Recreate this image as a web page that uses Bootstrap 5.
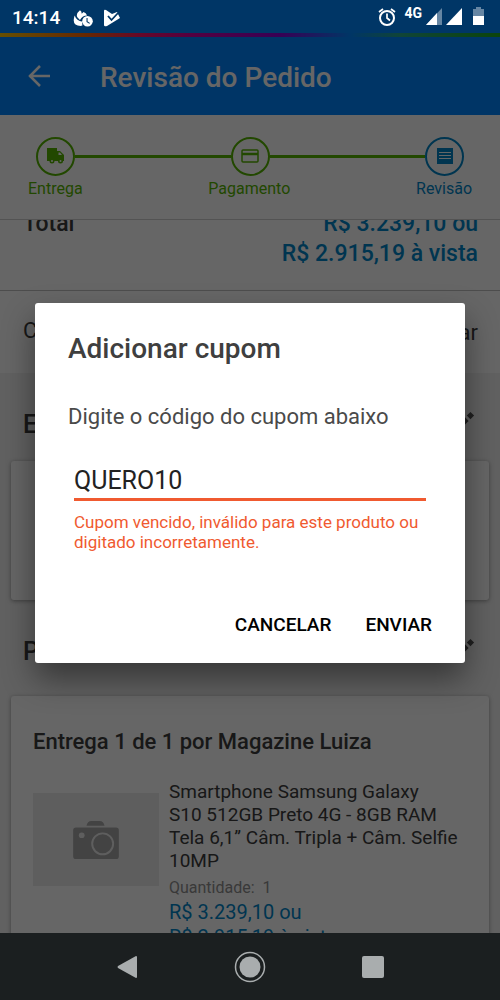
<!DOCTYPE html>
<html lang="pt-BR">
<head>
<meta charset="utf-8">
<meta name="viewport" content="width=device-width, initial-scale=1">
<title>Revisão do Pedido</title>
<link href="https://cdn.jsdelivr.net/npm/bootstrap@5.3.0/dist/css/bootstrap.min.css" rel="stylesheet">
<style>
  body { font-family: Roboto, "Liberation Sans", sans-serif; color: #3c3c3c; background: #1b1f20; }
  svg { display: block; flex: none; }
  .fw-mid { font-weight: 500; }
  .shell { height: 100vh; }
  .status-bar { height: 33px; background: #003666; color: #fff; font-size: 19px; padding: 0 14px 0 12px; }
  .net { font-size: 14px; line-height: 14px; margin-top: -8px; }
  .screen { background: #f2f2f2; }
  .rainbow { height: 4px; background: linear-gradient(90deg, #ffc400 0%, #ff6400 17%, #ff1464 28%, #d200a0 38%, #8c00d2 56%, #0086ff 70%, #28aa8c 80%, #1eaa1e 100%); }
  .app-bar { height: 78px; background: #0086ff; color: #fff; padding-left: 26px; gap: 46px; }
  .app-bar h1 { font-size: 28px; }
  .stepper { background: #fff; border-bottom: 1px solid #d0d0d0; height: 105px; padding: 21px 28px 0; z-index: 1; }
  .track { height: 40px; padding: 0 8px; }
  .ring { width: 39px; height: 39px; border: 2px solid; border-radius: 50%; }
  .rail { height: 3px; background: #55b400; }
  .done { color: #55b400; }
  .current { color: #0086c9; }
  .labels { font-size: 16px; line-height: 26px; }
  .total { background: #fff; margin-top: -11px; height: 82px; padding: 0 22px 0 23px; border-bottom: 1px solid #c0c0c0; font-size: 23px; line-height: 30px; }
  .coupon-row { background: #fff; height: 82px; padding: 0 22px 0 23px; font-size: 22px; }
  .heading { font-size: 25px; line-height: 30px; height: 88px; padding: 8px 25px 0 23px; }
  .panel { background: #fff; margin: 0 11px; border-radius: 3px; box-shadow: 0 1px 4px #00000060; }
  .address { height: 139px; }
  .items { padding: 30px 22px 48px; }
  .items h3 { font-size: 22px; line-height: 32px; }
  .photo { width: 126px; height: 93px; background: #ececec; color: #a8a8a8; margin-top: 13px; }
  .product { font-size: 19px; line-height: 23px; gap: 10px; margin-top: 22px; }
  .qty { font-size: 16px; line-height: 24px; color: #8f8f8f; }
  .cost { font-size: 20px; line-height: 25px; }
  .shade { background: rgba(0, 0, 0, .6); z-index: 2; padding: 0 35px; }
  .dialog { background: #fff; border-radius: 3px; box-shadow: 0 16px 32px #00000070; padding: 29px 33px 24px; }
  .dialog h2 { font-size: 28px; line-height: 34px; color: #3f3f3f; }
  .dialog label { font-size: 22px; line-height: 30px; color: #4a4a4a; margin-top: 36px; }
  .field { margin: 0 6px; padding-top: 32px; }
  .code { border: 0; border-bottom: 3px solid #f05a30; font-size: 25px; line-height: 34px; color: #222; background: none; outline: 0; padding: 0; }
  .problem { font-size: 17px; line-height: 20px; color: #f05a30; margin-top: 11px; }
  .actions { gap: 34px; margin-top: 59px; }
  .act { border: 0; background: none; color: #000; font-size: 19px; line-height: 28px; padding: 0; font-weight: 500; }
  .soft-keys { height: 67px; background: #1b1f20; color: #a9adae; gap: 96px; }
  .soft-keys button { border: 0; background: none; color: inherit; padding: 0; }
</style>
</head>
<body>
<div class="shell d-flex flex-column">
  <header class="status-bar d-flex align-items-center justify-content-between flex-shrink-0">
    <div class="d-flex align-items-center pt-1">
      <span class="fw-mid">14:14</span>
      <svg class="ms-2 ps-1" width="27" height="22" viewBox="0 0 26 22"><path fill="#fff" d="M9 1q-5 4-3 8l3 3q3-5 8-5q-1-3-4-4l-2 2q0-3-2-4zM3 7q-4 12 7 12l2-1q-1-2 0-4q-7-1-9-7z"/><circle cx="17.500" cy="13.500" r="6" fill="#fff"/><path d="M17 10v4l3 2" fill="none" stroke="#003666" stroke-width="1.200"/></svg>
      <svg class="ms-2" width="18" height="20" viewBox="0 0 18 20"><path fill="#fff" d="M1 2q0-2 2-1l6 4l5-2l3 6L4 17q-3 1-3-1z"/><path d="M5 7l3.500 4L15 4" fill="none" stroke="#003666" stroke-width="1.800"/></svg>
    </div>
    <div class="d-flex align-items-center">
      <svg width="18" height="20" viewBox="0 0 18 20" fill="none" stroke="#fff" stroke-width="2"><circle cx="9" cy="11" r="7"/><path d="M9 6.500V11l3 2.500M1 5l4-3M17 5l-4-3" stroke-width="1.700"/></svg>
      <span class="net fw-bold ms-2">4G</span>
      <svg class="ms-1" width="16" height="17" viewBox="0 0 16 17"><path fill="#6686a3" d="M16 0v17H0z"/><path fill="#fff" d="M11 5v12H0z"/></svg>
      <svg class="ms-1" width="16" height="17" viewBox="0 0 16 17"><path fill="#fff" d="M16 0v17H0z"/></svg>
      <svg class="ms-2" width="16" height="19" viewBox="0 0 16 19"><path fill="#6686a3" d="M3 2h3V0h5v2h3v7H3z"/><path fill="#fff" d="M3 9h11v9H3z"/></svg>
    </div>
  </header>

  <div class="screen position-relative flex-grow-1 d-flex flex-column overflow-hidden">
    <div class="rainbow flex-shrink-0"></div>
    <div class="app-bar d-flex align-items-center flex-shrink-0">
      <svg width="28" height="26" viewBox="0 0 28 26" fill="none" stroke="#fff" stroke-width="2.500"><path d="M24 13H3M14 3L4 13l10 10"/></svg>
      <h1 class="fw-mid m-0 pt-1">Revisão do Pedido</h1>
    </div>
    <div class="stepper flex-shrink-0">
      <div class="track d-flex align-items-center">
        <span class="ring done d-flex align-items-center justify-content-center flex-shrink-0">
          <svg width="19" height="16" viewBox="0 0 19 16" fill="currentColor"><path d="M1 0h10v3h3l4 4v6h-1a2.500 2.500 0 0 1-5 0H8.500a2.500 2.500 0 0 1-5 0H1z"/><path d="M12.500 4.500h1.500l2 2.500h-3.500z" fill="#fff"/><circle cx="6" cy="13" r="1" fill="#fff"/><circle cx="14.500" cy="13" r="1" fill="#fff"/></svg>
        </span>
        <span class="rail flex-grow-1"></span>
        <span class="ring done d-flex align-items-center justify-content-center flex-shrink-0">
          <svg width="18" height="14" viewBox="0 0 18 14" fill="none" stroke="currentColor"><rect x="1" y="1" width="16" height="12" rx="1" stroke-width="1.500"/><path d="M1 5h16" stroke-width="2.500"/></svg>
        </span>
        <span class="rail flex-grow-1"></span>
        <span class="ring current d-flex align-items-center justify-content-center flex-shrink-0">
          <svg width="16" height="16" viewBox="0 0 16 16"><path fill="currentColor" d="M0 0h16v16H0z"/><path d="M2 4.500h12M2 7.500h12M2 10.500h12" stroke="#fff"/></svg>
        </span>
      </div>
      <div class="labels d-flex justify-content-between">
        <span class="done">Entrega</span><span class="done">Pagamento</span><span class="current">Revisão</span>
      </div>
    </div>

    <main class="flex-grow-1">
      <section class="total d-flex justify-content-between fw-mid">
        <span>Total</span>
        <span class="current text-end">R$ 3.239,10 ou<br>R$ 2.915,19 à vista</span>
      </section>
      <section class="coupon-row d-flex align-items-center justify-content-between">
        <span class="pb-1">C</span><a href="#" class="text-reset text-decoration-none">ar</a>
      </section>
      <div class="heading d-flex align-items-center justify-content-between">
        <span class="fw-mid pt-2">E</span>
        <svg width="20" height="20" viewBox="0 0 22 22" fill="#505050"><path d="M1 17L11 7l4 4L5 21H1zM13 5l4-4l4 4l-4 4z"/></svg>
      </div>
      <section class="panel address"></section>
      <div class="heading d-flex align-items-center justify-content-between">
        <span class="fw-mid pt-2">P</span>
        <svg width="20" height="20" viewBox="0 0 22 22" fill="#505050"><path d="M1 17L11 7l4 4L5 21H1zM13 5l4-4l4 4l-4 4z"/></svg>
      </div>
      <section class="panel items mt-2">
        <h3 class="fw-mid m-0">Entrega 1 de 1 por Magazine Luiza</h3>
        <div class="product d-flex">
          <div class="photo d-flex align-items-center justify-content-center flex-shrink-0">
            <svg width="46" height="40" viewBox="0 0 48 42"><path fill="currentColor" d="M14 6q1-5 5-5h9q4 0 5 5zM3 8h42q3 0 3 3v27q0 3-3 3H3q-3 0-3-3V11q0-3 3-3z"/><circle cx="31" cy="25" r="11" fill="none" stroke="#ececec" stroke-width="2"/><circle cx="9" cy="16" r="3" fill="#ececec"/></svg>
          </div>
          <div>
            <div>Smartphone Samsung Galaxy<br>S10 512GB Preto 4G - 8GB RAM<br>Tela 6,1” Câm. Tripla + Câm. Selfie<br>10MP</div>
            <div class="qty mt-1">Quantidade: &nbsp;1</div>
            <div class="current cost">R$ 3.239,10 ou<br>R$ 2.915,19 à vista</div>
          </div>
        </div>
      </section>
    </main>

    <div class="shade position-absolute top-0 start-0 w-100 h-100 d-flex align-items-center">
      <form class="dialog w-100" role="dialog" aria-labelledby="dialog-title">
        <h2 id="dialog-title" class="fw-mid m-0">Adicionar cupom</h2>
        <label for="code" class="d-block">Digite o código do cupom abaixo</label>
        <div class="field">
          <input id="code" class="code w-100" type="text" value="QUERO10" aria-describedby="problem">
          <div id="problem" class="problem">Cupom vencido, inválido para este produto ou digitado incorretamente.</div>
        </div>
        <div class="actions d-flex justify-content-end">
          <button type="button" class="act">CANCELAR</button>
          <button type="submit" class="act">ENVIAR</button>
        </div>
      </form>
    </div>
  </div>

  <nav class="soft-keys d-flex align-items-center justify-content-center flex-shrink-0">
    <button type="button" aria-label="Voltar"><svg width="22" height="24" viewBox="0 0 22 24"><path fill="currentColor" d="M20 1q1 0 1 1v20q0 1-1 1L2 13q-1-1 0-2z"/></svg></button>
    <button type="button" aria-label="Início"><svg width="32" height="32" viewBox="0 0 32 32"><circle cx="16" cy="16" r="14.500" fill="none" stroke="currentColor" stroke-width="1.500"/><circle cx="16" cy="16" r="10.500" fill="currentColor"/></svg></button>
    <button type="button" aria-label="Recentes"><svg width="22" height="22" viewBox="0 0 22 22"><rect width="22" height="22" rx="2" fill="currentColor"/></svg></button>
  </nav>
</div>
<script src="https://cdn.jsdelivr.net/npm/bootstrap@5.3.0/dist/js/bootstrap.bundle.min.js"></script>
</body>
</html>
